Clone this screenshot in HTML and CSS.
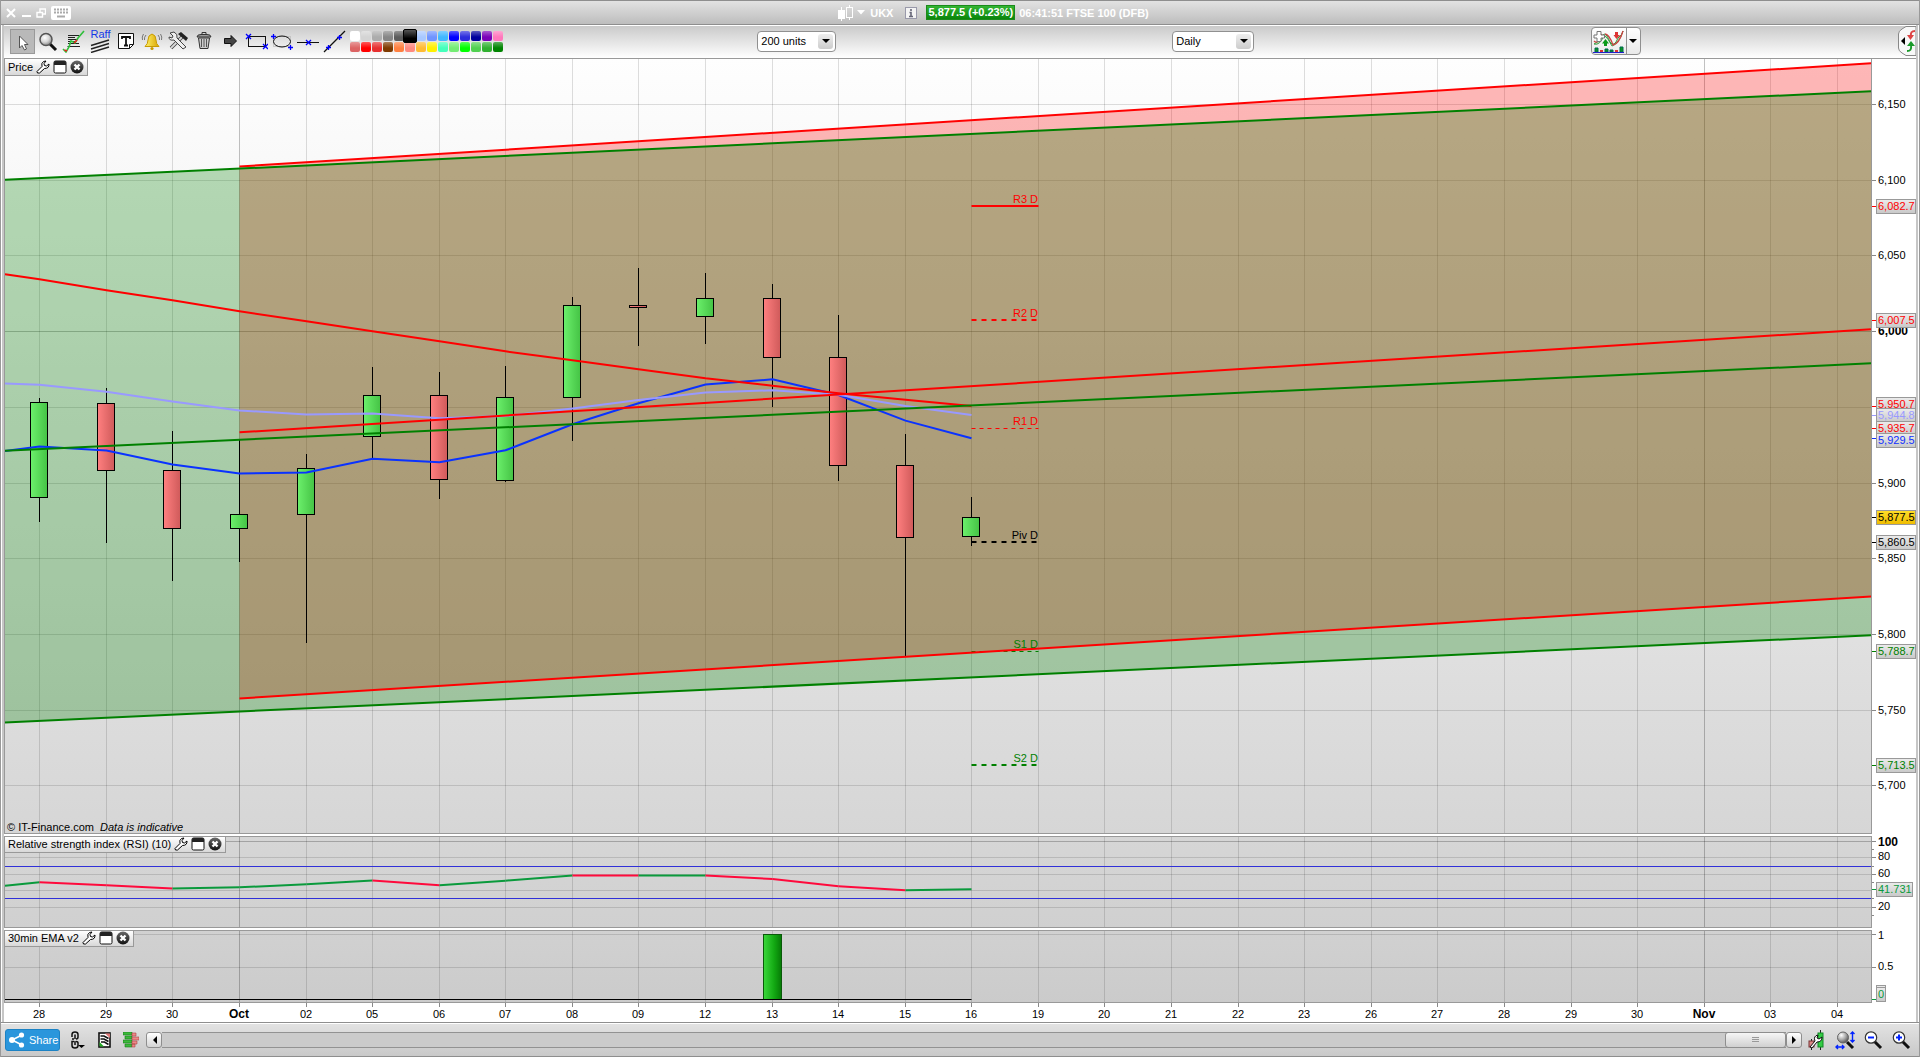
FILE: index.html
```html
<!DOCTYPE html>
<html lang="en">
<head>
<meta charset="utf-8">
<title>UKX - FTSE 100 (DFB)</title>
<link rel="stylesheet" href="styles.css">
</head>
<body>
<svg class="defs" aria-hidden="true">
  <defs>
    <linearGradient id="bg-price" x1="0" y1="0" x2="0" y2="1"><stop offset="0" stop-color="#fefefe"/><stop offset="1" stop-color="#d6d6d6"/></linearGradient>
    <linearGradient id="bg-rsi" x1="0" y1="0" x2="0" y2="1"><stop offset="0" stop-color="#d6d6d6"/><stop offset="1" stop-color="#d0d0d0"/></linearGradient>
    <linearGradient id="bg-ema" x1="0" y1="0" x2="0" y2="1"><stop offset="0" stop-color="#d1d1d1"/><stop offset="1" stop-color="#cbcbcb"/></linearGradient>
    <linearGradient id="up"><stop offset="0" stop-color="#6cf06c"/><stop offset="1" stop-color="#45c345"/></linearGradient>
    <linearGradient id="down"><stop offset="0" stop-color="#ff8080"/><stop offset="1" stop-color="#cf5a5a"/></linearGradient>
    <linearGradient id="bar"><stop offset="0" stop-color="#3bd83b"/><stop offset="0.6" stop-color="#12a812"/><stop offset="1" stop-color="#067a06"/></linearGradient>
    <linearGradient id="tag" x1="0" y1="0" x2="0" y2="1"><stop offset="0" stop-color="#ececec"/><stop offset="1" stop-color="#c8c8c8"/></linearGradient>
    <linearGradient id="tag-now" x1="0" y1="0" x2="0" y2="1"><stop offset="0" stop-color="#ffdf2a"/><stop offset="1" stop-color="#eebb00"/></linearGradient>
    <radialGradient id="lens" cx="0.4" cy="0.35" r="0.7"><stop offset="0" stop-color="#fff"/><stop offset="0.5" stop-color="#d8d8d8"/><stop offset="1" stop-color="#808080"/></radialGradient>
    <radialGradient id="lens-dark" cx="0.35" cy="0.3" r="0.8"><stop offset="0" stop-color="#fff"/><stop offset="0.5" stop-color="#aaa"/><stop offset="1" stop-color="#444"/></radialGradient>
    <linearGradient id="gold"><stop offset="0" stop-color="#fff36a"/><stop offset="1" stop-color="#d9a400"/></linearGradient>
    <linearGradient id="ball" x1="0" y1="0" x2="0" y2="1"><stop offset="0" stop-color="#6a6a6a"/><stop offset="1" stop-color="#111"/></linearGradient>
    <symbol id="i-wrench" viewBox="0 0 14 14"><path d="M1 11.500 L6 6.500 Q5 3 7.500 1.500 L10 1 L8 3.500 L8.500 5.500 L10.500 6 L13 4 Q13.300 8.500 8.500 8.500 L3.500 13 L1.500 13 Z" fill="#fff" stroke="#000" stroke-linejoin="round"/></symbol>
    <symbol id="i-window" viewBox="0 0 14 14"><rect x="1" y="1" width="12" height="12" rx="1.500" fill="#fff" stroke="#111"/><path d="M1 5 V2.500 Q1 1 2.500 1 H11.500 Q13 1 13 2.500 V5 Z" fill="#222"/></symbol>
    <symbol id="i-close" viewBox="0 0 14 14"><circle cx="7" cy="7" r="6.500" fill="url(#ball)"/><path d="M4.500 4.500 L9.500 9.500 M9.500 4.500 L4.500 9.500" stroke="#fff" stroke-width="2.400"/></symbol>
  </defs>
</svg>

<div class="window">
  <header class="titlebar">
    <div class="window-buttons">
      <button type="button" aria-label="Close"><svg width="10" height="10" viewBox="0 0 10 10"><path d="M1 1 L9 9 M9 1 L1 9" stroke="#fff" stroke-width="2"/></svg></button>
      <button type="button" aria-label="Minimize"><svg width="10" height="10" viewBox="0 0 10 10"><path d="M1 8 H10" stroke="#fff" stroke-width="2"/></svg></button>
      <button type="button" aria-label="Restore"><svg width="10" height="10" viewBox="0 0 10 10"><path d="M4 4 V1 H9.500 V6 H7 M1 4.500 H6.500 V9 H1 Z" fill="none" stroke="#fff" stroke-width="1.400"/></svg></button>
      <button type="button" aria-label="Keyboard"><svg width="20" height="14" viewBox="0 0 20 14"><rect width="20" height="14" rx="2" fill="#fff"/><path d="M3 3.500 H17 M3 6.500 H17" stroke="#aaa" stroke-width="2" stroke-dasharray="2 1"/><path d="M6 10.500 H14" stroke="#aaa" stroke-width="2"/></svg></button>
    </div>
    <div class="instrument">
      <svg width="16" height="16" viewBox="0 0 16 16"><path d="M4.500 2 V16" stroke="#fff"/><rect x="1" y="5" width="7" height="9" fill="#fff"/><path d="M12.500 0 V3 M12.500 12 V15" stroke="#fff"/><rect x="9.500" y="2.500" width="6" height="10" fill="none" stroke="#fff"/></svg>
      <svg width="8" height="5" viewBox="0 0 8 5"><path d="M0 0 H8 L4 4.500 Z" fill="#fff"/></svg>
      <span class="symbol">UKX</span>
      <button type="button" class="info" aria-label="Information"><svg width="12" height="12" viewBox="0 0 12 12"><rect x="0.500" y="0.500" width="11" height="11" fill="#f4f4f4" stroke="#99a"/><path d="M6 2 V4 M4.500 5.500 H6 V9.500 M4 9.500 H8" stroke="#667" stroke-width="1.600" fill="none"/></svg></button>
      <span class="quote">5,877.5 (+0.23%)</span>
      <span class="session">06:41:51 FTSE 100 (DFB)</span>
    </div>
  </header>

  <div class="toolbar">
    <div class="tools">
      <button type="button" class="tool active" aria-label="Pointer"><svg width="24" height="24" viewBox="0 0 24 24"><path d="M8.500 6 V18 L11 15.500 L13.500 20 L15.500 19 L13.500 14.500 H17 Z" fill="#fff" stroke="#555"/></svg></button>
      <button type="button" class="tool" aria-label="Zoom"><svg width="24" height="24" viewBox="0 0 24 24"><path d="M14 15 L20 21" stroke="#111" stroke-width="3"/><circle cx="10" cy="10.500" r="6" fill="url(#lens)" stroke="#555" stroke-width="1.500"/></svg></button>
      <button type="button" class="tool" aria-label="Indicators"><svg width="24" height="24" viewBox="0 0 24 24"><path d="M6 6.500 H17 M6 8.500 H13 M6 10.500 H16 M6 12.500 H14 M6 14.500 H17 M5.500 17.500 H18" stroke="#222" stroke-width="1.200"/><path d="M1 20 L4 23 L7 18 L9 12 L13 14 L16 9 L22 2" fill="none" stroke="#2ebf3a" stroke-width="1.600"/><path d="M2.500 21 L5 22 M12 14 L15 11" stroke="#e22" stroke-width="1.600"/></svg></button>
      <button type="button" class="tool raff" aria-label="Raff regression"><span>Raff</span><svg width="24" height="14" viewBox="0 0 24 14"><path d="M3 6.500 L21 1 M3 10 L21 4.500 M3 13.500 L21 8" stroke="#222" stroke-width="1.400"/></svg></button>
      <button type="button" class="tool" aria-label="Text"><svg width="24" height="24" viewBox="0 0 24 24"><path d="M4.500 4.500 H19.500 V15.500 L15.500 19.500 H4.500 Z" fill="#fff" stroke="#111"/><path d="M15.500 19.500 V15.500 H19.500" fill="none" stroke="#111"/><path d="M8 10 V8 H16 V10 M12 8 V16 M10 16.500 H14" stroke="#111" stroke-width="1.800" fill="none"/></svg></button>
      <button type="button" class="tool" aria-label="Alert"><svg width="24" height="24" viewBox="0 0 24 24"><path d="M12 5 Q16 6 16 11 Q16 15 19 17.500 H5 Q8 15 8 11 Q8 6 12 5 Z" fill="url(#gold)" stroke="#c89a00"/><circle cx="12" cy="19.500" r="1.600" fill="#c89a00"/><path d="M6 6 Q4 8 4.500 11 M3.500 5 Q1.500 8 2.500 11 M18 6 Q20 8 19.500 11 M20.500 5 Q22.500 8 21.500 11" fill="none" stroke="#777"/></svg></button>
      <button type="button" class="tool" aria-label="Settings"><svg width="24" height="24" viewBox="0 0 24 24"><path d="M5 19 L16 8" stroke="#444" stroke-width="3.600"/><path d="M5 19 L16 8" stroke="#d9d9d9" stroke-width="1.800"/><path d="M12 5 L15 3 L22 9 L20 12 Z" fill="#222"/><path d="M4 4 L7 7 L6 9 L3 8 Q3 12 8 11 L17 20 L20 18 L11 9 Q12 5 8 3 Z" fill="#eee" stroke="#444"/></svg></button>
      <button type="button" class="tool" aria-label="Delete"><svg width="24" height="24" viewBox="0 0 24 24"><path d="M6.500 9 L8 19.500 H16 L17.500 9 Z" fill="#ccc" stroke="#333"/><path d="M9.500 10 V18 M12 10 V18 M14.500 10 V18" stroke="#555"/><path d="M5 8 Q5 5.500 9 5.500 H15 Q19 5.500 19 8 Z" fill="#999" stroke="#333"/><path d="M10 5 V3.500 H14 V5" fill="none" stroke="#333"/></svg></button>
      <button type="button" class="tool" aria-label="Arrow"><svg width="24" height="24" viewBox="0 0 24 24"><path d="M6.500 9.500 H13 V6.500 L18.500 12 L13 17.500 V14.500 H6.500 Z" fill="#444" stroke="#111"/></svg></button>
      <button type="button" class="tool" aria-label="Rectangle"><svg width="24" height="24" viewBox="0 0 24 24"><rect x="4.500" y="7.500" width="17" height="10" fill="none" stroke="#111"/><path d="M2 5 L7 10 M7 5 L2 10 M19 15 L24 20 M24 15 L19 20" stroke="#00f" stroke-width="1.300"/></svg></button>
      <button type="button" class="tool" aria-label="Ellipse"><svg width="24" height="24" viewBox="0 0 24 24"><rect x="3.500" y="7.500" width="17" height="10" fill="none" stroke="#aaa" stroke-dasharray="1 1"/><ellipse cx="12" cy="12.500" rx="8.500" ry="5.500" fill="none" stroke="#111"/><path d="M1 7.500 H6 M3.500 5 V10 M18 18.500 H23 M20.500 16 V21" stroke="#00f" stroke-width="1.300"/></svg></button>
      <button type="button" class="tool" aria-label="Horizontal line"><svg width="24" height="24" viewBox="0 0 24 24"><path d="M1 13.500 H23" stroke="#111"/><path d="M10 11 L15 16 M15 11 L10 16" stroke="#00f" stroke-width="1.300"/></svg></button>
      <button type="button" class="tool" aria-label="Trend line"><svg width="24" height="24" viewBox="0 0 24 24"><path d="M2 23 L23 2" stroke="#111" stroke-width="1.200"/><path d="M4 18.500 H9 M6.500 16 V21 M15 8.500 H20 M17.500 6 V11" stroke="#00f" stroke-width="1.300"/></svg></button>
      <div class="palette" id="palette"></div>
    </div>
    <div class="cell">
      <label class="picker units"><select aria-label="Units"><option>200 units</option></select><span class="arrow"></span></label>
    </div>
    <div class="cell">
      <label class="picker"><select aria-label="Timeframe"><option>Daily</option></select><span class="arrow"></span></label>
    </div>
    <div class="cell last">
      <button type="button" class="indicator-button" aria-label="Add indicator">
        <svg width="34" height="26" viewBox="0 0 34 26"><path d="M2 16 Q8 14 12 6 Q15 6 18 14 Q22 20 26 10 L30 6 L31 3 Q27 16 20 18 Q16 10 12 7 Q8 18 2 16 Z" fill="#bfe8c4" stroke="#3a9a44"/><path d="M2 13 Q6 17 10 6 M13 6 Q17 6 21 17 Q27 16 31 3" fill="none" stroke="#c44" stroke-width="1.300"/><path d="M5 3.500 H9 V7 H12.500 V10 H9 V13.500 H5 V10 H2 V7 H5 Z" fill="#fff" stroke="#777"/><path d="M12 18 V15.500 H10 L13.500 11 L17 15.500 H15 V18 Z" fill="#0a9a1a"/><path d="M23 4 H26 V7 H28 L24.500 11 L21.500 7 H23 Z" fill="#d33"/><path d="M3 20 H6 V24 H3 Z M13 21 H16 V24 H13 Z M18 22 H21 V24 H18 Z M28 19 H31 V24 H28 Z" fill="#0a9a1a" stroke="#065"/><path d="M8 22 H11 V24 H8 Z M23 22 H26 V24 H23 Z" fill="#d33"/><path d="M1 24.500 H32" stroke="#22c"/></svg>
        <span class="drop"></span>
      </button>
      <button type="button" class="side-tab" aria-label="Open order panel"><svg width="18" height="30" viewBox="0 0 18 30"><path d="M18 0.500 H8 L4 3 Q0.500 5 0.500 8 V22 Q0.500 25 4 27 L8 29.500 H18 Z" fill="#f8f8f8" stroke="#888"/><path d="M3 15 L7 11 V19 Z" fill="#000"/><path d="M17 5 Q12 5 13 10" fill="none" stroke="#d44" stroke-width="2"/><path d="M9 9 H16 L12.500 14 Z" fill="#d44"/><path d="M9 25 Q14 25 13 20" fill="none" stroke="#1a9a2a" stroke-width="2"/><path d="M9 20 H17 L13 15 Z" fill="#1a9a2a"/></svg></button>
    </div>
  </div>

  <main class="charts">
    <section class="panel price">
      <svg class="plot" id="price" role="img" aria-label="Price chart"></svg>
      <div class="panel-head"><span>Price</span>
        <button type="button" aria-label="Configure price"><svg><use href="#i-wrench"/></svg></button><button type="button" aria-label="Detach price"><svg><use href="#i-window"/></svg></button><button type="button" aria-label="Close price"><svg><use href="#i-close"/></svg></button></div>
      <p class="credit">© IT-Finance.com <em>Data is indicative</em></p>
    </section>
    <section class="panel rsi">
      <svg class="plot" id="rsi" role="img" aria-label="RSI chart"></svg>
      <div class="panel-head"><span>Relative strength index (RSI) (10)</span>
        <button type="button" aria-label="Configure RSI"><svg><use href="#i-wrench"/></svg></button><button type="button" aria-label="Detach RSI"><svg><use href="#i-window"/></svg></button><button type="button" aria-label="Close RSI"><svg><use href="#i-close"/></svg></button></div>
    </section>
    <section class="panel ema">
      <svg class="plot" id="ema" role="img" aria-label="EMA chart"></svg>
      <div class="panel-head"><span>30min EMA v2</span>
        <button type="button" aria-label="Configure EMA"><svg><use href="#i-wrench"/></svg></button><button type="button" aria-label="Detach EMA"><svg><use href="#i-window"/></svg></button><button type="button" aria-label="Close EMA"><svg><use href="#i-close"/></svg></button></div>
    </section>
    <div class="dates"><svg class="plot" id="dates"></svg></div>
  </main>

  <footer class="statusbar">
    <button type="button" class="share"><svg width="16" height="16" viewBox="0 0 16 16"><path d="M13 3 L3 8 L13 13" fill="none" stroke="#fff" stroke-width="1.600"/><circle cx="12.500" cy="3" r="2.600" fill="#fff"/><circle cx="3" cy="8" r="3" fill="#fff"/><circle cx="12.500" cy="13" r="2.600" fill="#fff"/></svg>Share</button>
    <div class="foot-icons">
      <button type="button" aria-label="Link"><svg width="16" height="18" viewBox="0 0 16 18"><path d="M2 6 V3.500 Q2 1 5 1 Q8 1 8 3.500 V6 Q8 8 6 8 M5 3.500 V8 M4 8 H2 M5 10 V14 M4 10.500 H2 V14.500 Q2 17 5 17 Q8 17 8 14.500 V12 Q8 10.500 6 10.500" fill="none" stroke="#111" stroke-width="1.500"/><path d="M8 14 H15 L11.500 17 Z"/></svg></button>
      <button type="button" aria-label="Notes"><svg width="13" height="16" viewBox="0 0 13 16"><rect x="1" y="1" width="11" height="14" fill="#fff" stroke="#111" stroke-width="1.600"/><path d="M7 1.500 H12 V6 Z" fill="#d77"/><path d="M2.500 4 H6 L10.500 6.500 M2.500 7 H6 L10.500 9.500 M3 10 H6.500 L10.500 12.500" fill="none" stroke="#111" stroke-width="1.600"/><path d="M1.500 10 V14.500 H6 Z" fill="#2a2"/></svg></button>
      <button type="button" aria-label="Order book"><svg width="16" height="16" viewBox="0 0 16 16"><path d="M0 0 H9 V3 H0 Z M2 4 H9 V7 H2 Z M0 8 H9 V11 H0 Z M2 12 H9 V15 H2 Z" fill="#3cba3c" stroke="#187818" stroke-width="0.600"/><path d="M9 1 H13 V4 H9 Z M9 5 H16 V8 H9 Z M9 9 H14 V12 H9 Z M9 12 H12 V15 H9 Z" fill="#e88" stroke="#a44" stroke-width="0.600"/></svg></button>
    </div>
    <div class="scroller">
      <button type="button" class="step" aria-label="Scroll left"><svg width="5" height="8" viewBox="0 0 5 8"><path d="M5 0 V8 L1 4 Z"/></svg></button>
      <div class="track"><div class="thumb"><i></i></div></div>
      <button type="button" class="step" aria-label="Scroll right"><svg width="5" height="8" viewBox="0 0 5 8"><path d="M0 0 V8 L4 4 Z"/></svg></button>
    </div>
    <div class="zoomers">
      <button type="button" aria-label="Chart settings"><svg width="20" height="20" viewBox="0 0 20 20"><path d="M4.500 9 V20 M13.500 0 V20" stroke="#222"/><rect x="2" y="11" width="5" height="6" fill="#d88" stroke="#733"/><rect x="11" y="3" width="5" height="14" fill="#3c4" stroke="#182"/><path d="M3 17 L8 11 Q6 6 11 5 L10 8 L12 9 L15 7 Q15 12 10 12 L5 18 Z" fill="#fff" stroke="#111"/></svg></button>
      <button type="button" aria-label="Fit"><svg width="20" height="20" viewBox="0 0 20 20"><path d="M12 12 L18 18" stroke="#111" stroke-width="3"/><circle cx="8" cy="7.500" r="5.500" fill="url(#lens-dark)" stroke="#666"/><path d="M17.500 2 V12 M15.500 4 L17.500 2 L19.500 4 M15.500 10 L17.500 12 L19.500 10 M1 17 H9 M3 15 L1 17 L3 19 M7 15 L9 17 L7 19" fill="none" stroke="#02f" stroke-width="1.400"/></svg></button>
      <button type="button" aria-label="Zoom out"><svg width="20" height="20" viewBox="0 0 20 20"><path d="M11 11 L18 18" stroke="#111" stroke-width="3"/><circle cx="8" cy="7.500" r="5.700" fill="#fff" stroke="#333" stroke-width="1.200"/><path d="M5 7.500 H11" stroke="#02f" stroke-width="2"/></svg></button>
      <button type="button" aria-label="Zoom in"><svg width="20" height="20" viewBox="0 0 20 20"><path d="M11 11 L18 18" stroke="#111" stroke-width="3"/><circle cx="8" cy="7.500" r="5.700" fill="#fff" stroke="#333" stroke-width="1.200"/><path d="M5 7.500 H11 M8 4.500 V10.500" stroke="#02f" stroke-width="2"/></svg></button>
    </div>
  </footer>
</div>
<script src="chart.js"></script>
</body>
</html>
```

FILE: styles.css
```css
* { box-sizing: border-box; }
html, body { height: 100%; margin: 0; }
body {
  background: #fff;
  color: #000;
  font: 11px/14px "Liberation Sans", Arial, sans-serif;
}
button {
  display: block;
  margin: 0;
  padding: 0;
  border: 0;
  background: none;
  font: inherit;
  color: inherit;
}
svg { display: block; }
.defs { position: absolute; width: 0; height: 0; }

.window {
  display: flex;
  flex-direction: column;
  height: 100vh;
  border-left: 1px solid #999;
  border-right: 1px solid #999;
}

/* title bar */
.titlebar {
  display: flex;
  flex: none;
  align-items: center;
  height: 25px;
  border-top: 1px solid #8e8e8e;
  border-bottom: 1px solid #8e8e8e;
  background: linear-gradient(#e2e2e2, #bdbdbd);
  color: #fff;
  font-weight: bold;
}
.window-buttons { display: flex; align-items: center; gap: 5px; flex: 0 0 43.6%; padding-left: 5px; }
.instrument { display: flex; align-items: center; white-space: nowrap; }
.symbol { margin: 0 12px 0 5px; }
.instrument > svg + svg { margin-left: 4px; }
.info { margin-right: 9px; }
.quote { padding: 0 1px; margin-right: 4px; border: 1px solid #1b8a1b; background: linear-gradient(#33b533, #0a860a); line-height: 13px; }

/* toolbar */
.toolbar {
  display: grid;
  grid-template-columns: 39.4% 21.7% 21.9% 1fr;
  align-items: center;
  flex: none;
  height: 34px;
  margin: 0 3px;
  padding-bottom: 2px;
  border-top: 1px solid #fff;
  border-bottom: 1px solid #999;
  background: linear-gradient(#cacaca, #fff);
}
.tools { display: flex; align-items: center; gap: 1px; padding-left: 6px; }
.tool { width: 25px; height: 25px; }
.tool.active { border: 1px solid #999; background: #b9b9b9; }
.raff { color: #1238e8; line-height: 10px; }
.palette { display: grid; grid-template-columns: repeat(14, 10px); gap: 1px; padding-left: 2px; }
.swatch { height: 10px; border-radius: 2px; background-image: linear-gradient(rgba(255,255,255,.35), rgba(255,255,255,0) 60%); }
.swatch.selected { margin: -2px; height: 14px; width: 14px; border: 1px solid #000; background-image: linear-gradient(#555, #000 70%); z-index: 1; }
.cell { display: flex; align-items: center; }
.cell.last { justify-content: space-between; }
.picker { position: relative; display: block; width: 82px; }
.picker.units { width: 79px; }
.picker select {
  display: block;
  width: 100%;
  height: 21px;
  padding: 0 3px;
  appearance: none;
  border: 1px solid #909090;
  border-radius: 4px;
  background: #fff;
  color: #000;
  font: inherit;
}
.arrow {
  position: absolute;
  top: 3px;
  right: 3px;
  width: 15px;
  height: 15px;
  border-radius: 3px;
  background: linear-gradient(#eee, #ccc);
  pointer-events: none;
}
.arrow::after, .drop::after {
  content: "";
  position: absolute;
  top: 50%;
  left: 50%;
  margin: -2px 0 0 -4px;
  border: 4px solid transparent;
  border-top-color: #000;
  border-bottom: 0;
}
.indicator-button { display: flex; height: 28px; border: 1px solid #909090; border-radius: 4px; background: linear-gradient(#fff, #eaeaea); }
.drop { position: relative; width: 14px; height: 26px; border-left: 1px solid #909090; }

/* chart panels */
.charts {
  display: flex;
  flex: 1;
  flex-direction: column;
  min-height: 0;
  margin: 0 3px;
  gap: 2px;
}
.charts, .toolbar { box-shadow: -2px 0 #c6c6c6, 2px 0 #c6c6c6; }
.panel { position: relative; flex: none; }
.price { flex: 1; min-height: 0; }
.rsi { height: 92px; }
.ema { height: 73px; }
.dates { flex: none; height: 19px; margin-top: -2px; }
.plot { width: 100%; height: 100%; }
.price .plot { position: absolute; inset: 0; }
.plot text { font-size: 11px; }
.plot text.major { font-size: 12px; font-weight: bold; }
.panel-head {
  position: absolute;
  top: 0;
  left: 0;
  display: flex;
  align-items: center;
  gap: 3px;
  height: 17px;
  padding: 0 3px 1px;
  border: solid #999;
  border-width: 0 1px 1px;
  background: linear-gradient(#fff, #d8d8d8);
}
.rsi .panel-head, .ema .panel-head { border-top-width: 1px; }
.panel-head svg { width: 14px; height: 14px; }
.credit { position: absolute; left: 3px; bottom: 0; margin: 0; }
.credit em { margin-left: 3px; }

/* bottom bar */
.statusbar {
  display: flex;
  align-items: center;
  flex: none;
  height: 35px;
  padding: 0 8px 0 4px;
  border-top: 1px solid #8e8e8e;
  border-bottom: 1px solid #8e8e8e;
  background: linear-gradient(#fff 1px, #e2e2e2 1px, #c9c9c9);
}
.share {
  display: flex;
  align-items: center;
  gap: 4px;
  width: 55px;
  height: 22px;
  padding-left: 3px;
  border: 1px solid #1c82c4;
  border-radius: 3px;
  background: #2a96dc;
  color: #fff;
}
.foot-icons { display: flex; align-items: center; gap: 12px; margin: 0 7px 0 10px; }
.scroller { display: flex; flex: 1; align-items: center; }
.step {
  display: grid;
  place-items: center;
  flex: none;
  width: 16px;
  height: 16px;
  border: 1px solid #8e8e8e;
  border-radius: 3px;
  background: linear-gradient(#fff, #d4d4d4);
}
.track { display: flex; flex: 1; justify-content: flex-end; height: 16px; border: solid #929292; border-width: 1px 0; background: #cbcbcb; }
.thumb { display: grid; place-items: center; width: 61px; height: 16px; margin-top: -1px; border: 1px solid #8e8e8e; border-radius: 3px; background: linear-gradient(#f6f6f6, #d0d0d0); }
.thumb i { width: 7px; height: 5px; background: repeating-linear-gradient(#999 0 1px, transparent 1px 2px); }
.zoomers { display: flex; gap: 8px; margin-left: 5px; }
```

FILE: chart.js
```js
(function () {
  // The layout grid of the chart: the plot spans x 4..1872, each panel spans its own y range.
  var LEFT = 4, SPAN = 1868, AXIS = 44;
  var DAYS = ['28', '29', '30', 'Oct', '02', '05', '06', '07', '08', '09', '12', '13', '14', '15',
    '16', '19', '20', '21', '22', '23', '26', '27', '28', '29', '30', 'Nov', '03', '04'];

  function dayX(i) { return Math.floor(39.7 + 66.58 * i) + 0.5; }

  // high, body top, body bottom, low, direction
  var CANDLES = [
    [398, 402, 497, 522, 1], [388, 403, 470, 543, 0], [431, 470, 528, 581, 0], [440, 514, 528, 562, 1],
    [454, 468, 514, 643, 1], [367, 395, 436, 460, 1], [372, 395, 479, 499, 0], [366, 397, 480, 482, 1],
    [297, 305, 397, 441, 1], [268, 305, 307, 346, 0], [273, 298, 316, 344, 1], [284, 298, 357, 407, 0],
    [315, 357, 465, 481, 0], [434, 465, 537, 656, 0], [497, 517, 536, 546, 1]
  ];
  // first value is at the left edge, then one per day
  var FAST = [451, 446.5, 450.5, 464.5, 473.5, 472.5, 458.7, 462.3, 450.3, 424.3, 403.3, 384.6, 379.3, 395, 420.6, 438.3];
  var SLOW = [383.5, 384.7, 391.7, 401.5, 410.5, 414.5, 413.5, 418.3, 416, 408.5, 400, 392.6, 390.3, 394.7, 406, 415];
  var LONG = [274.3, 279.3, 290.3, 300.3, 311.3, 321.3, 331.3, 341.3, 351.3, 360.3, 369.3, 378.3, 385.7, 393.3, 399.7, 406];
  var RSI = [885.7, 882.3, 885.3, 888.5, 887.3, 884.3, 880.4, 885.3, 880.7, 875.5, 875.5, 875.5, 879, 886.3, 890.3, 889.3];
  var RSI_UP = [1, 0, 0, 1, 1, 1, 0, 1, 1, 0, 1, 0, 0, 0, 1];
  var PIVOTS = [
    ['R3 D', 206, 'red', 2, ''], ['R2 D', 320, 'red', 2, '5 5'], ['R1 D', 428.5, 'red', 1, '4 4'],
    ['Piv D', 542, 'black', 2, '5 5'], ['S1 D', 651.5, 'green', 1, '4 4'], ['S2 D', 765, 'green', 2, '5 5']
  ];
  // text, tick y, box top, colour
  var TAGS = [
    ['6,082.7', 206.5, 199, 'red'], ['6,007.5', 320.5, 313, 'red'], ['5,950.7', 406.5, 397, 'red'],
    ['5,944.8', 415.5, 408, '#9999ff'], ['5,935.7', 428.5, 421, 'red'], ['5,929.5', 438.5, 433, '#1030ff'],
    ['5,877.5', 517.5, 510, 'black', 'now'], ['5,860.5', 542.5, 535, 'black'],
    ['5,788.7', 651.5, 644, 'green'], ['5,713.5', 765.5, 758, 'green']
  ];

  function panel(id, top, height, back) {
    var el = document.getElementById(id), box = el.getBoundingClientRect();
    var W = box.width, H = box.height, plotW = W - AXIS, out = [];
    var p = {
      W: W, H: H, w: plotW,
      x: function (v) { return (v - LEFT) * plotW / SPAN; },
      y: function (v) { return (v - top) * H / height; },
      snap: function (v) { return Math.floor(p.y(v)) + 0.5; },
      add: function (s) { out.push(s); },
      line: function (x1, y1, x2, y2, color, width, extra) {
        out.push('<line x1="' + x1 + '" y1="' + y1 + '" x2="' + x2 + '" y2="' + y2 + '" stroke="' + color +
          '" stroke-width="' + (width || 1) + '" ' + (extra || '') + '/>');
      },
      text: function (s, x, y, extra) { out.push('<text x="' + x + '" y="' + y + '" ' + (extra || '') + '>' + s + '</text>'); },
      curve: function (ys, color) {
        out.push('<polyline fill="none" stroke="' + color + '" stroke-width="2" points="' + ys.map(function (y, i) {
          return p.x(i ? dayX(i - 1) : 5) + ',' + p.y(y);
        }).join(' ') + '"/>');
      },
      hgrid: function (y, major) { p.line(0, p.snap(y), plotW, p.snap(y), 'rgba(0,0,0,' + (major ? 0.24 : 0.13) + ')'); },
      vgrid: function () {
        DAYS.forEach(function (d, i) {
          var x = Math.floor(p.x(dayX(i))) + 0.5;
          p.line(x, 0, x, H, 'rgba(0,0,0,' + (/[A-Z]/.test(d) ? 0.24 : 0.13) + ')');
        });
      },
      label: function (s, y, major, dy) {
        p.line(plotW, p.snap(y), plotW + 4, p.snap(y), '#888');
        p.text(s, plotW + 6, Math.floor(p.y(y)) + (dy || 4), major ? 'class="major"' : '');
      },
      tag: function (s, tick, y, color, width, fill) {
        p.line(plotW, p.snap(tick), plotW + 4, p.snap(tick), color);
        var ty = Math.round(p.y(y));
        out.push('<rect x="' + (plotW + 4.5) + '" y="' + (ty + 0.5) + '" width="' + width + '" height="14" fill="url(#' + (fill || 'tag') + ')" stroke="#999"/>');
        p.text(s, plotW + 6, ty + 11, 'fill="' + color + '"');
      },
      frame: function () {
        p.line(0.5, 0, 0.5, H, '#999');
        p.line(plotW - 0.5, 0, plotW - 0.5, H, '#999');
        p.line(0, H - 0.5, plotW, H - 0.5, '#999');
        if (id !== 'price') p.line(0, 0.5, plotW, 0.5, '#999');
      },
      done: function () { el.innerHTML = out.join(''); }
    };
    if (back) p.add('<rect width="' + plotW + '" height="' + H + '" fill="url(#' + back + ')"/>');
    return p;
  }

  function drawPrice() {
    var p = panel('price', 59, 775, 'bg-price'), r = p.x(1871), m = p.x(239.5), l = p.x(5);
    function priceY(v) { return 331.6 + (6000 - v) * 1.514; }
    p.vgrid();
    for (var v = 5700; v <= 6150; v += 50) p.hgrid(priceY(v), v === 6000);
    function band(x, a, b, c, d, color) {
      p.add('<polygon fill="' + color + '" fill-opacity="0.28" points="' +
        [x + ',' + p.y(a), r + ',' + p.y(b), r + ',' + p.y(d), x + ',' + p.y(c)].join(' ') + '"/>');
    }
    band(m, 166.5, 63.3, 698.5, 596.5, 'red');
    band(l, 179.7, 91.3, 722.5, 635.3, 'green');
    CANDLES.forEach(function (c, i) {
      var x = Math.floor(p.x(dayX(i))) + 0.5;
      p.line(x, p.y(c[0]), x, p.y(c[3]), '#000');
      p.add('<rect x="' + (x - 9) + '" y="' + p.snap(c[1]) + '" width="17" height="' + (p.snap(c[2]) - p.snap(c[1])) +
        '" fill="url(#' + (c[4] ? 'up' : 'down') + ')" stroke="#000"/>');
    });
    PIVOTS.forEach(function (q) {
      p.line(p.x(971.5), p.y(q[1]), p.x(1038.5), p.y(q[1]), q[2], q[3], q[4] ? 'stroke-dasharray="' + q[4] + '"' : '');
      p.text(q[0], p.x(1038), Math.floor(p.y(q[1])) - 3, 'text-anchor="end" fill="' + q[2] + '"');
    });
    p.curve(FAST, '#0a32ff');
    p.curve(SLOW, '#9999ff');
    p.curve(LONG, '#ff0000');
    [[m, 166.5, 63.3, 'red'], [m, 432.3, 329.3, 'red'], [m, 698.5, 596.5, 'red'],
      [l, 179.7, 91.3, 'green'], [l, 450.7, 363.3, 'green'], [l, 722.5, 635.3, 'green']].forEach(function (s) {
      p.line(s[0], p.y(s[1]), r, p.y(s[2]), s[3], 2);
    });
    p.frame();
    [6150, 6100, 6050, 6000, 5900, 5850, 5800, 5750, 5700].forEach(function (v) {
      p.label(v.toLocaleString('en-US'), priceY(v), v === 6000);
    });
    TAGS.forEach(function (t) { p.tag(t[0], t[1], t[2], t[3], 39, t[4] ? 'tag-now' : ''); });
    p.done();
  }

  function drawRsi() {
    var p = panel('rsi', 836, 92, 'bg-rsi');
    p.vgrid();
    [841.5, 857.5, 874.5, 890.5, 907.5].forEach(function (y, i) { p.hgrid(y, !i); });
    p.line(0, p.snap(866.5), p.w, p.snap(866.5), '#3030d8');
    p.line(0, p.snap(898.5), p.w, p.snap(898.5), '#3030d8');
    RSI_UP.forEach(function (up, i) {
      p.line(p.x(i ? dayX(i - 1) : 5), p.y(RSI[i]), p.x(dayX(i)), p.y(RSI[i + 1]), up ? '#0a9a3c' : '#ff0a3c', 2);
    });
    p.frame();
    [849.5, 866.5, 882.5, 898.5, 915.5].forEach(function (y) { p.line(p.w, p.snap(y), p.w + 2, p.snap(y), '#888'); });
    p.label('100', 841.5, true, 5);
    p.label('80', 857.5, false, 3);
    p.label('60', 874.5, false, 3);
    p.label('20', 907.5, false, 3);
    p.tag('41.731', 889.5, 882, '#0a9a3c', 36);
    p.done();
  }

  function drawEma() {
    var p = panel('ema', 930, 73, 'bg-ema');
    p.vgrid();
    p.hgrid(934.5);
    p.hgrid(967.5);
    p.add('<rect x="' + (Math.floor(p.x(763)) + 0.5) + '" y="' + p.snap(934) + '" width="18" height="' + (p.snap(999) - p.snap(934)) + '" fill="url(#bar)" stroke="#0a5a0a"/>');
    p.line(0, p.snap(999), p.x(971.5), p.snap(999), '#000');
    p.frame();
    p.label('1', 934.5, false, 5);
    p.label('0.5', 967.5, false, 3);
    p.add('<rect x="' + (p.w + 4.5) + '" y="' + p.snap(985) + '" width="9" height="14" fill="url(#tag)" stroke="#999"/>');
    p.tag('0', 999, 987, '#0a9a3c', 9);
    p.done();
  }

  function drawDates() {
    var p = panel('dates', 1003, 19);
    DAYS.forEach(function (d, i) {
      var x = Math.floor(p.x(dayX(i))) + 0.5;
      p.line(x, 0, x, 4, '#888');
      p.text(d, x - 0.5, 15, 'text-anchor="middle"' + (/[A-Z]/.test(d) ? ' class="major"' : ''));
    });
    p.done();
  }

  function drawPalette() {
    var colors = ['#fff', '#d4d4d4', '#acacac', '#868686', '#5c5c5c', '#000', '#a8c8ff', '#6f94ff', '#40b8ff', '#0000ff', '#2c2cdc', '#00009c', '#7a00b8', '#ff78bc',
      '#dc6464', '#ff0000', '#e63030', '#7f3a00', '#ff8040', '#ff8a80', '#ffbb33', '#fff000', '#44ffbb', '#74ec74', '#00ff00', '#50d050', '#30b030', '#008400'];
    document.getElementById('palette').innerHTML = colors.map(function (c, i) {
      return '<button type="button" aria-label="Colour ' + (i + 1) + '" class="swatch' + (i === 5 ? ' selected' : '') + '" style="background-color:' + c + '"></button>';
    }).join('');
  }

  function draw() { drawPrice(); drawRsi(); drawEma(); drawDates(); }
  drawPalette();
  draw();
  window.addEventListener('resize', draw);
}());
```
